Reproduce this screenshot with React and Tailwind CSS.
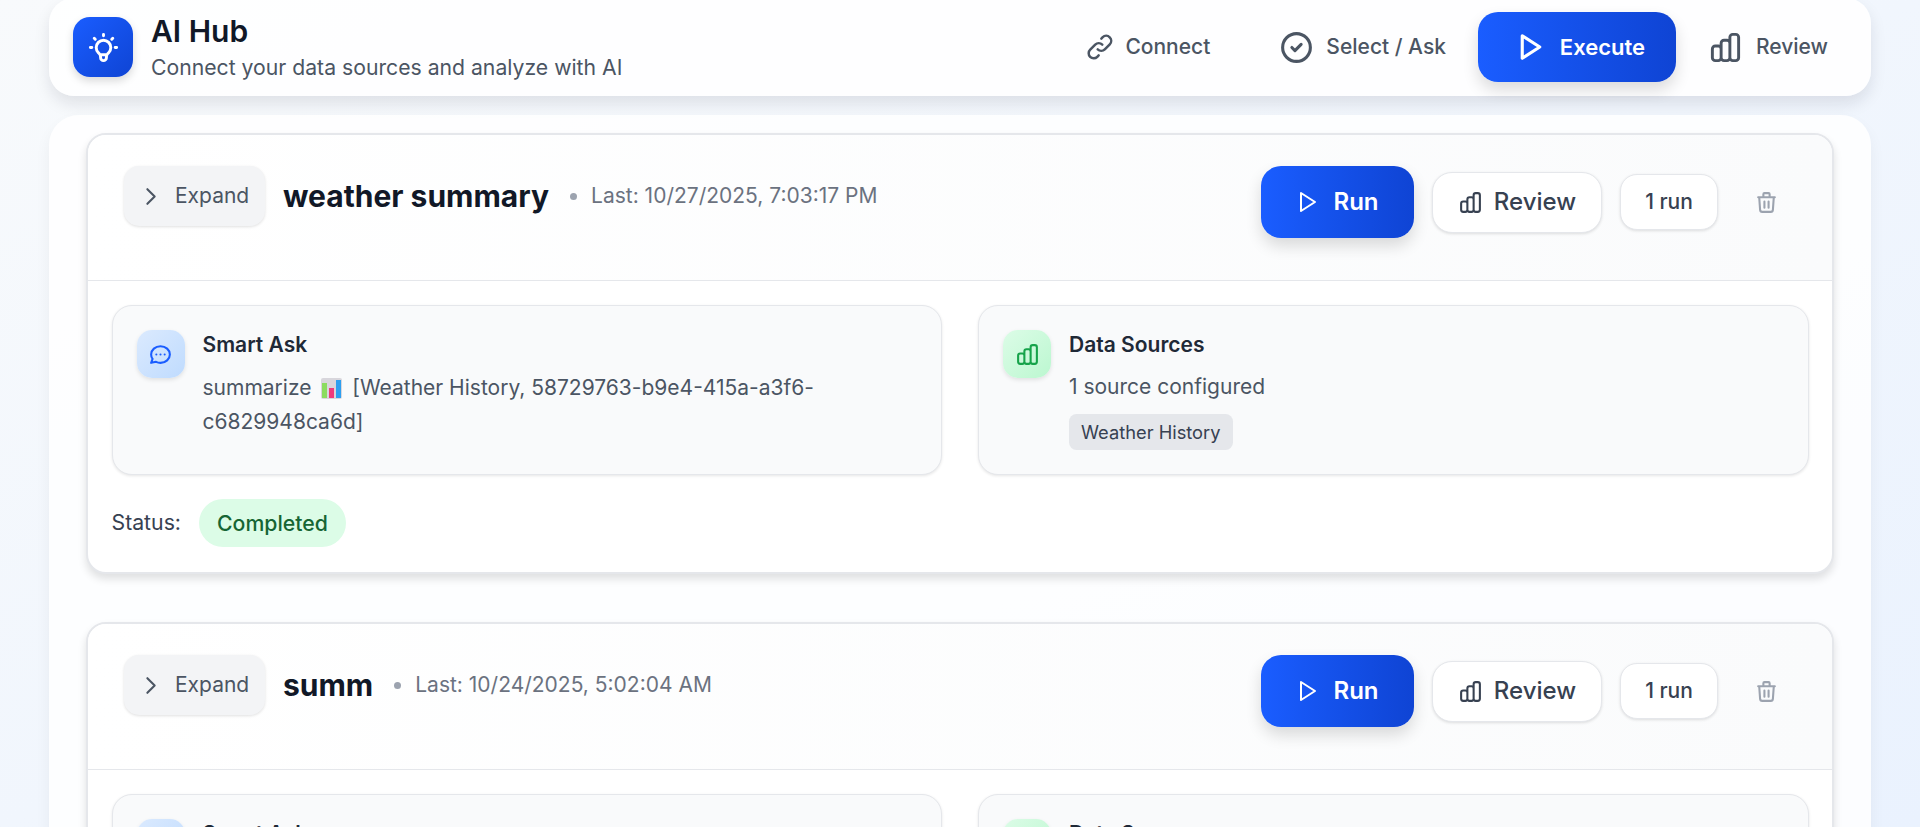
import React from 'react';
import {
  HiOutlineLightBulb,
  HiOutlineLink,
  HiOutlineCheckCircle,
  HiOutlineChartBar,
  HiOutlineTrash,
  HiOutlineChevronRight,
  HiOutlineChat,
} from 'react-icons/hi';
import { FiPlay } from 'react-icons/fi';

const runs = [
  { title: 'weather summary', last: '10/27/2025, 7:03:17 PM' },
  { title: 'summ', last: '10/24/2025, 5:02:04 AM' },
];

// bar chart emoji, no colour emoji font in the sandbox
function ChartEmoji() {
  return (
    <svg viewBox="0 0 21 21" className="inline-block w-[21px] h-[21px] align-[-4px] mx-[4px]">
      <rect x="0" y="0" width="21" height="21" rx="2" fill="#d8d6dc" />
      <rect x="1" y="5" width="5" height="15" fill="#8bdc5f" />
      <rect x="8" y="10" width="5" height="10" fill="#ee3a7c" />
      <rect x="15" y="2" width="5" height="18" fill="#2d9ff0" />
    </svg>
  );
}

function Panel({ icon, iconBg, title, children }) {
  return (
    <div className="h-[170px] flex gap-[18px] p-[24px] bg-[#f9fafb] border border-[#e5e7eb] rounded-[20px] shadow-[0_1px_3px_rgba(0,0,0,0.1)]">
      <div className={`w-[48px] h-[48px] shrink-0 flex items-center justify-center rounded-[15px] shadow-[0_2px_4px_rgba(0,0,0,0.1)] ${iconBg}`}>
        {icon}
      </div>
      <div className="min-w-0">
        <div className="mt-[2px] text-[21px] leading-[25px] font-semibold text-[#1f2937]">{title}</div>
        {children}
      </div>
    </div>
  );
}

function RunCard({ title, last }) {
  return (
    <div className="bg-white border-[2.5px] border-[#e5e7eb] rounded-[20px] shadow-[0_5px_8px_rgba(0,0,0,0.12)] mb-[48px]">
      <div className="h-[146px] pl-[36px] pr-[35px] pt-[31px] flex justify-between items-start border-b border-[#e5e7eb] rounded-t-[18px] bg-linear-to-r from-white to-[#fafbfc]">
        <div className="flex items-start">
          <button className="w-[141px] h-[60px] flex items-center gap-[12px] pl-[14px] rounded-[15px] bg-[#f3f4f6] text-[#4b5563] text-[21px] shadow-[0_1px_3px_rgba(0,0,0,0.12)]">
            <HiOutlineChevronRight className="w-[25px] h-[25px]" />
            Expand
          </button>
          <h3 className="ml-[18px] text-[30px] leading-[60px] font-bold text-[#111827]">{title}</h3>
          <span className="ml-[21px] mt-[27px] w-[7px] h-[7px] rounded-full bg-[#9ca3af]" />
          <span className="ml-[14px] text-[21px] leading-[60px] text-[#6b7280]">Last: {last}</span>
        </div>
        <div className="flex items-center gap-[18px] h-[72px]">
          <button className="w-[153px] h-[72px] flex items-center justify-center gap-[13px] rounded-[20px] text-white text-[24px] font-semibold bg-linear-to-r from-[#1a5dff] to-[#0f44d4] shadow-[0_8px_16px_rgba(0,0,0,0.14)]">
            <FiPlay className="w-[24px] h-[24px]" />
            Run
          </button>
          <button className="w-[170px] h-[61px] flex items-center justify-center gap-[11px] rounded-[20px] bg-white border-[1.5px] border-[#e5e7eb] text-[#374151] text-[24px] font-medium shadow-[0_1px_3px_rgba(0,0,0,0.12)]">
            <HiOutlineChartBar className="w-[25px] h-[25px]" />
            Review
          </button>
          <div className="w-[98px] h-[56px] flex items-center justify-center rounded-[17px] bg-white border-[1.5px] border-[#e5e7eb] text-[#374151] text-[21px] font-medium shadow-[0_1px_3px_rgba(0,0,0,0.12)]">
            1 run
          </div>
          <button className="w-[61px] flex justify-center text-[#9ca3af]">
            <HiOutlineTrash className="w-[25px] h-[25px]" />
          </button>
        </div>
      </div>
      <div className="px-[23.5px] pt-[24px] pb-[25px]">
        <div className="grid grid-cols-2 gap-[36px]">
          <Panel
            title="Smart Ask"
            iconBg="bg-linear-to-br from-[#dbeafe] to-[#bfdbfe]"
            icon={<HiOutlineChat className="w-[25px] h-[25px] text-[#1a5dff]" />}
          >
            <p className="mt-[14px] text-[21px] leading-[34px] text-[#4b5563]">
              summarize <ChartEmoji /> [Weather History, 58729763-b9e4-415a-a3f6-c6829948ca6d]
            </p>
          </Panel>
          <Panel
            title="Data Sources"
            iconBg="bg-linear-to-br from-[#dcfce7] to-[#bbf7d0]"
            icon={<HiOutlineChartBar className="w-[25px] h-[25px] text-[#16a34a]" />}
          >
            <p className="mt-[12px] text-[21px] leading-[35px] text-[#4b5563]">1 source configured</p>
            <span className="inline-block mt-[10px] h-[36px] px-[12px] rounded-[7.5px] bg-[#e5e7eb] text-[#374151] text-[18.3px] leading-[36px]">
              Weather History
            </span>
          </Panel>
        </div>
        <div className="mt-[24px] flex items-center gap-[18px]">
          <span className="text-[21.25px] text-[#374151]">Status:</span>
          <span className="h-[48px] px-[18px] rounded-full bg-[#dcfce7] text-[#166534] text-[21.25px] font-medium leading-[48px]">
            Completed
          </span>
        </div>
      </div>
    </div>
  );
}

function App() {
  return (
    <div
      className="h-[827px] overflow-hidden px-[49px] bg-linear-to-br from-[#f8fafc] to-[#eaf2fe]"
      style={{ fontFamily: 'Inter, sans-serif' }}
    >
      <header className="-mt-[2px] h-[98px] pl-[24px] pr-[43px] flex items-center justify-between rounded-[25px] bg-white/90 shadow-[0_8px_16px_rgba(15,23,42,0.1)]">
        <div className="flex items-center gap-[18px]">
          <div className="w-[60px] h-[60px] flex items-center justify-center rounded-[17px] bg-linear-to-br from-[#1a5dff] to-[#0f44d4] shadow-[0_4px_8px_rgba(0,0,0,0.15)]">
            <HiOutlineLightBulb className="w-[35px] h-[35px] text-white" />
          </div>
          <div>
            <h1 className="text-[30px] leading-[36px] font-semibold text-[#111827]">AI Hub</h1>
            <p className="mt-[4px] text-[21.2px] leading-[28px] text-[#4b5563]">Connect your data sources and analyze with AI</p>
          </div>
        </div>
        <nav className="flex items-center">
          <div className="flex items-center gap-[10px] mr-[68px] text-[21px] font-medium text-[#4b5563]">
            <HiOutlineLink className="w-[30px] h-[30px]" />
            Connect
          </div>
          <div className="flex items-center gap-[11px] mr-[32px] text-[21px] font-medium text-[#4b5563]">
            <HiOutlineCheckCircle className="w-[37px] h-[37px]" />
            Select / Ask
          </div>
          <div className="w-[198px] h-[70px] pl-[7px] flex items-center justify-center gap-[14px] rounded-[20px] text-white text-[22px] font-semibold bg-linear-to-r from-[#1a5dff] to-[#0f44d4] shadow-[0_8px_16px_rgba(0,0,0,0.14)] mr-[32px]">
            <FiPlay className="w-[30px] h-[30px]" strokeWidth={2.5} />
            Execute
          </div>
          <div className="flex items-center gap-[13px] text-[21px] font-medium text-[#4b5563]">
            <HiOutlineChartBar className="w-[35px] h-[35px]" />
            Review
          </div>
        </nav>
      </header>
      <main className="mt-[19px] px-[37px] pt-[18px] rounded-[30px] bg-white/85 shadow-[0_8px_16px_rgba(15,23,42,0.05)]">
        {runs.map((r) => (
          <RunCard key={r.title} title={r.title} last={r.last} />
        ))}
      </main>
    </div>
  );
}

export default App;
